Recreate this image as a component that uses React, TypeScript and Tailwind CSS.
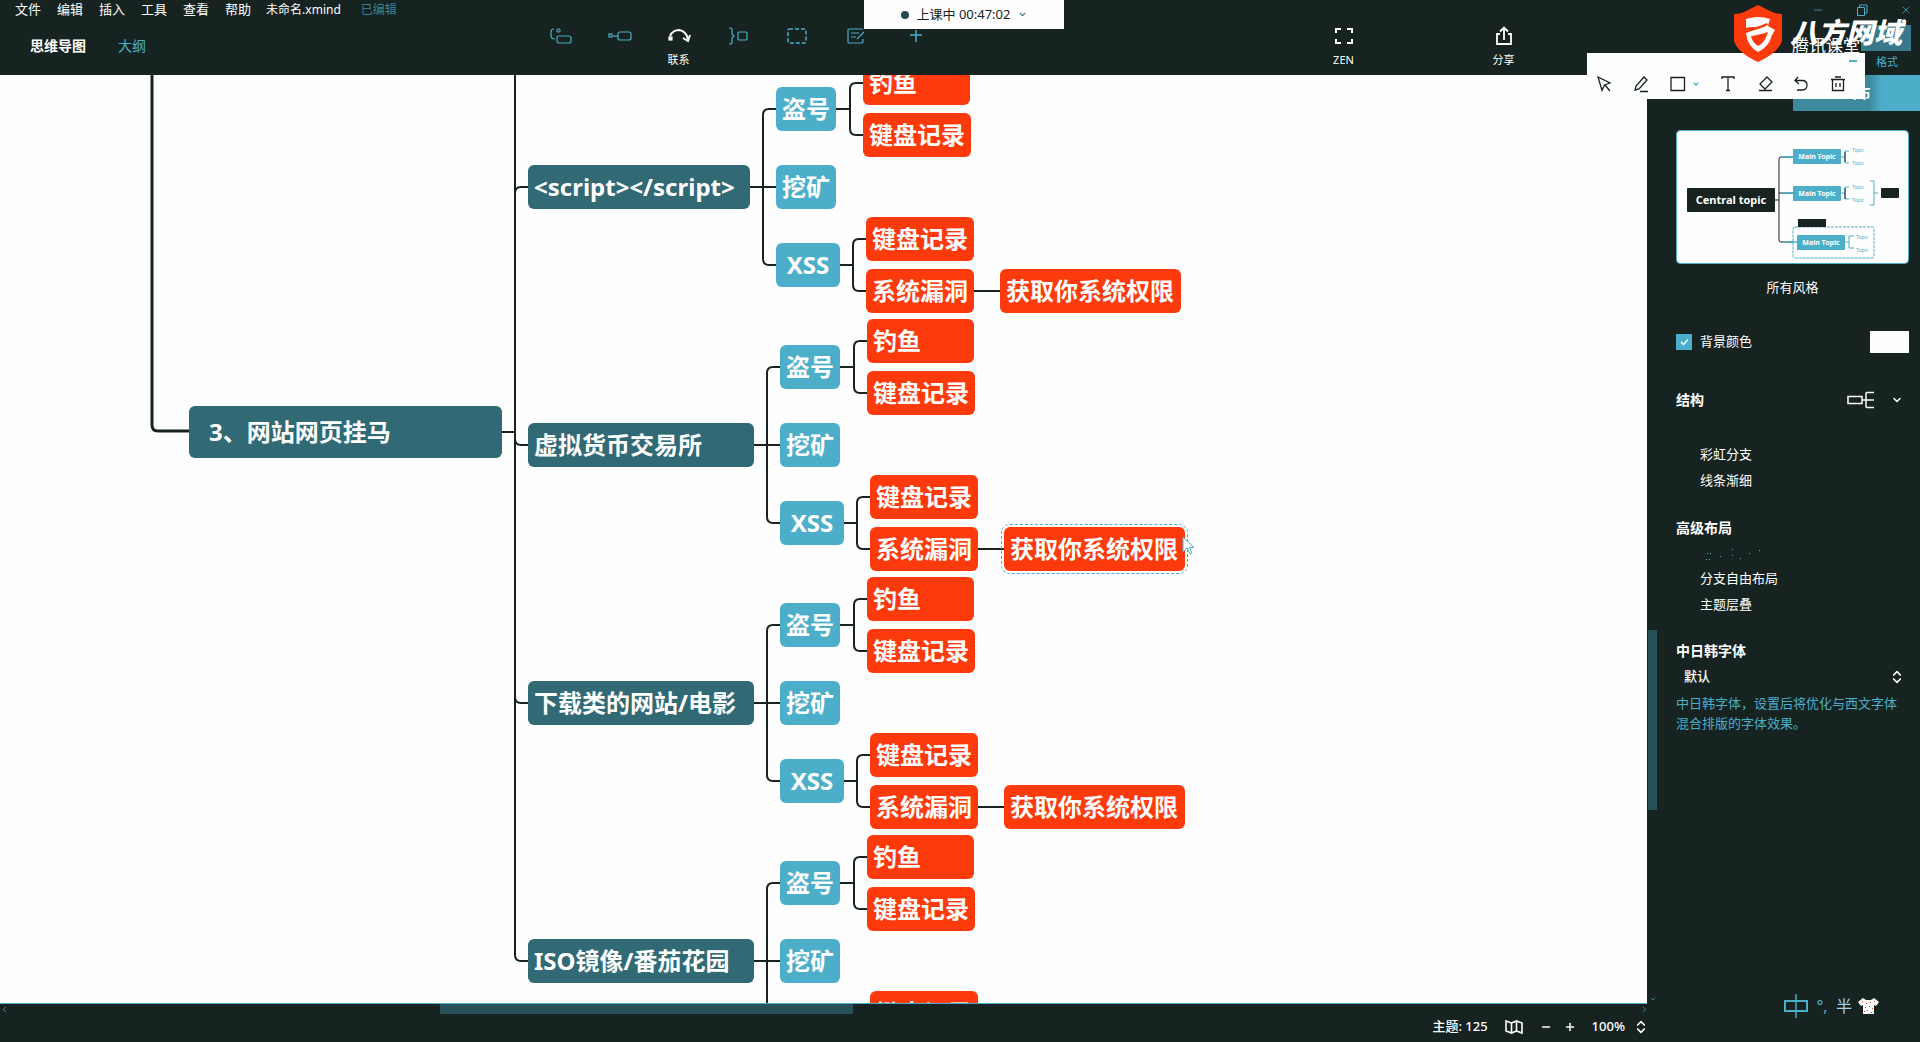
import React from "react";
import { ChevronDown, ChevronLeft, ChevronRight, ChevronsUpDown, Minus, Plus, X } from "lucide-react";

const LINE = "#162320";

type MapNode = { text: string; x: number; y: number; w: number; kind: "topic" | "sub" | "leaf"; selected?: boolean };

const groups = [
  { title: "<script></script>", width: 222, y: 187, dx: -4 },
  { title: "虚拟货币交易所", width: 226, y: 445, dx: 0 },
  { title: "下载类的网站/电影", width: 226, y: 703, dx: 0 },
  { title: "ISO镜像/番茄花园", width: 226, y: 961, dx: 0 },
];

const HEADER = 75;

function buildNodes(): MapNode[] {
  return groups.flatMap((g, i) => {
    const top = g.y - HEADER - 22;
    const d = g.dx;
    const nodes: MapNode[] = [
      { text: g.title, x: 528, y: top, w: g.width, kind: "topic" },
      { text: "盗号", x: 780 + d, y: top - 78, w: 60, kind: "sub" },
      { text: "挖矿", x: 780 + d, y: top, w: 60, kind: "sub" },
      { text: "XSS", x: 780 + d, y: top + 78, w: 64, kind: "sub" },
      { text: "钓鱼", x: 867 + d, y: top - 104, w: 107, kind: "leaf" },
      { text: "键盘记录", x: 867 + d, y: top - 52, w: 108, kind: "leaf" },
      { text: "键盘记录", x: 870 + d, y: top + 52, w: 108, kind: "leaf" },
      { text: "系统漏洞", x: 870 + d, y: top + 104, w: 108, kind: "leaf" },
      { text: "获取你系统权限", x: 1004 + d, y: top + 104, w: 181, kind: "leaf", selected: i === 1 },
    ];
    return nodes;
  });
}

const nodeStyles = {
  topic: "bg-[#316975] pl-1.5",
  sub: "bg-[#4caec9] justify-center",
  leaf: "bg-[#fd3a0c] pl-1.5",
};

function bracket(x0: number, xm: number, x1: number, mid: number, up: number, down: number) {
  return `M${x0} ${mid}H${xm} M${x1} ${mid - up}H${xm + 6}Q${xm} ${mid - up} ${xm} ${mid - up + 6}V${mid + down - 6}Q${xm} ${mid + down} ${xm + 6} ${mid + down}H${x1}`;
}

function Connectors() {
  return (
    <svg className="absolute left-0 top-0 h-full w-full" fill="none" stroke={LINE} strokeWidth="2" aria-hidden="true">
      <path strokeWidth="3" d="M152 0V350Q152 356 158 356H189" />
      <path d="M502 357H515M515 0V880Q515 886 521 886H528" />
      <path d="M515 118Q515 112 521 112H528M515 364Q515 370 521 370H528M515 622Q515 628 521 628H528" />
      {groups.map((g) => {
        const y = g.y - HEADER;
        const d = g.dx;
        return (
          <g key={g.title}>
            <path d={bracket(528 + g.width, 767 + d, 780 + d, y, 78, 78)} />
            <path d={`M${767 + d} ${y}H${780 + d}`} />
            <path d={bracket(840 + d, 854 + d, 867 + d, y - 78, 26, 26)} />
            <path d={bracket(844 + d, 857 + d, 870 + d, y + 78, 26, 26)} />
            <path d={`M${978 + d} ${y + 104}H${1004 + d}`} />
          </g>
        );
      })}
    </svg>
  );
}

function Canvas() {
  return (
    <main className="relative min-w-0 flex-1 overflow-hidden border-b border-[#4caec9] bg-[#fdfefd]">
      <Connectors />
      <div className="absolute left-[189px] top-[331px] flex h-[52px] w-[313px] items-center rounded-md bg-[#316975] pl-5 text-2xl font-bold">
        3、网站网页挂马
      </div>
      {buildNodes().map((n, i) => (
        <div
          key={i}
          className={`absolute flex h-11 items-center whitespace-nowrap rounded-md text-2xl font-bold ${nodeStyles[n.kind]} ${n.selected ? "outline-1 outline-offset-2 outline-dashed outline-[#4caec9]" : ""}`}
          style={{ left: n.x, top: n.y, width: n.w }}
        >
          {n.text}
        </div>
      ))}
      <svg className="absolute left-[1182px] top-[461px]" width="14" height="20" viewBox="0 0 14 20" fill="#fdfefd" stroke="#4caec9" strokeWidth="1">
        <path d="M1 1V16L5 12L8 18L10 17L7.500 11.500H12Z" />
      </svg>
    </main>
  );
}

const toolIcons = [
  { name: "主题", d: <><rect x="8" y="12" width="14" height="7" rx="2" /><path d="M5 5Q2 5 2 8V12Q2 15 6 15" /><rect x="8" y="5" width="3" height="3" rx="1" /></> },
  { name: "子主题", d: <><rect x="10" y="8" width="13" height="8" rx="2" /><rect x="1" y="10" width="3" height="3" /><path d="M5 12H10" /></> },
  { name: "联系", active: true, d: <><rect x="2" y="13" width="3" height="3" fill="currentColor" /><path strokeWidth="2" d="M3 12Q6 6 12 6Q19 7 21 15M16 14L21 17L23 11" /></> },
  { name: "概要", d: <><path d="M3 4H4Q6 4 6 6V10L8 12L6 14V18Q6 20 4 20H3" /><rect x="12" y="8" width="9" height="8" rx="1" /></> },
  { name: "外框", d: <rect x="3" y="5" width="18" height="14" rx="1" strokeWidth="1.500" strokeDasharray="4 2" /> },
  { name: "笔记", d: <><path d="M19 5H5Q4 5 4 6V18Q4 19 5 19H17Q19 19 19 17V15M7 9H15M7 13H12M13 15L20 8" /></> },
  { name: "插入", d: <path d="M13 6V18M7 11H19" strokeWidth="1.500" /> },
];

function ToolButton({ label, active, children }: { label: string; active?: boolean; children: React.ReactNode }) {
  return (
    <button aria-label={label} className={`flex w-[59px] flex-col items-center gap-1 ${active ? "text-white" : "text-[#4caec9]"}`}>
      <svg width="24" height="24" viewBox="0 0 24 24" fill="none" stroke="currentColor" strokeWidth="1.200">{children}</svg>
      {active && <span className="text-[11px] leading-4">{label}</span>}
    </button>
  );
}

function Header() {
  return (
    <header className="flex h-[75px] flex-none flex-col">
      <div className="flex h-5 items-center pl-[15px] pr-2 text-[13px]">
        <nav className="flex gap-4">
          {["文件", "编辑", "插入", "工具", "查看", "帮助"].map((m) => (
            <button key={m}>{m}</button>
          ))}
        </nav>
        <span className="ml-[15px] text-xs">未命名.xmind</span>
        <span className="ml-5 text-xs text-[#3a8295]">已编辑</span>
        <div className="ml-auto flex items-center gap-8 text-[#4caec9]">
          <button aria-label="最小化"><Minus size={12} strokeWidth={1.5} /></button>
          <button aria-label="还原">
            <svg width="12" height="12" viewBox="0 0 12 12" fill="none" stroke="currentColor"><path d="M1.500 3.500H8.500V11.500H1.500ZM3.500 3V1H11V9H9" /></svg>
          </button>
          <button aria-label="关闭"><X size={12} strokeWidth={1.5} /></button>
        </div>
      </div>
      <div className="flex h-[55px] items-start">
        <div className="flex w-[531px] items-center gap-8 pl-[30px] pt-4 text-sm">
          <button className="font-bold">思维导图</button>
          <button className="text-[#4caec9]">大纲</button>
        </div>
        <div className="flex items-start pt-1">
          {toolIcons.map((t) => (
            <ToolButton key={t.name} label={t.name} active={t.active}>{t.d}</ToolButton>
          ))}
        </div>
        <div className="ml-auto flex items-start gap-[101px] pr-[387px] pt-1">
          <ToolButton label="ZEN" active>
            <path strokeWidth="2" d="M4 9V5H9M15 5H20V9M20 15V19H15M9 19H4V15" />
          </ToolButton>
          <ToolButton label="分享" active>
            <path strokeWidth="1.800" d="M8 10H5V20H19V10H16M12 16V4M8 7.500L12 3.500L16 7.500" />
          </ToolButton>
        </div>
      </div>
    </header>
  );
}

function StylePreview() {
  const rows = [
    { x: 117, y: 19 },
    { x: 117, y: 56 },
    { x: 121, y: 105 },
  ];
  return (
    <svg className="w-full" viewBox="0 0 233 134" role="img" aria-label="Central topic">
      <rect x="0.500" y="0.500" width="232" height="133" rx="4" fill="#fdfefd" stroke="#4caec9" />
      <g fill="none" stroke={LINE}>
        <path d="M98 70H103M117 27H105Q103 27 103 29V110Q103 112 105 112H117M103 63H117" />
        <path d="M117 27H105M117 63H105M121 112H107" stroke="#4caec9" strokeWidth="1.500" />
        <path stroke="#4caec9" d="M165 27H169M173 21H169V33H173M165 63H169M173 57H169V69H173M168 112H173M178 106H173V118H178M194 51H198V75H194M198 63H202" />
        <path d="M169 22V32M169 58V69" />
        <rect x="117" y="97" width="81" height="31" rx="2" stroke="#4caec9" strokeDasharray="3 1" />
      </g>
      <rect x="11" y="58" width="88" height="24" rx="1" fill={LINE} />
      <text x="55" y="74" textAnchor="middle" fill="#fff" fontSize="11" fontWeight="700">Central topic</text>
      {rows.map((r) => (
        <g key={r.y}>
          <rect x={r.x} y={r.y} width="48" height="15" rx="1" fill="#4caec9" />
          <text x={r.x + 24} y={r.y + 10} textAnchor="middle" fill="#fff" fontSize="7" fontWeight="700">Main Topic</text>
        </g>
      ))}
      <g fill="#4caec9" fontSize="5">
        <text x="176" y="22">Topic</text>
        <text x="176" y="35">Topic</text>
        <text x="176" y="59">Topic</text>
        <text x="176" y="72">Topic</text>
        <text x="180" y="109">Topic</text>
        <text x="180" y="122">Topic</text>
      </g>
      <rect x="205" y="58" width="18" height="10" rx="1" fill={LINE} />
      <rect x="122" y="89" width="28" height="8" fill={LINE} />
    </svg>
  );
}

function Option({ label }: { label: string }) {
  return (
    <label className="flex h-[26px] items-center gap-2">
      <input type="checkbox" className="size-4 appearance-none" />
      {label}
    </label>
  );
}

function Sidebar() {
  return (
    <aside className="flex w-[262px] flex-none flex-col text-[13px]">
      <div className="flex justify-end">
        <button className="h-9 w-[127px] bg-linear-to-r from-[#3d8a9e] from-60% to-[#4caec9] to-70% text-sm font-bold">画布</button>
      </div>
      <div className="flex flex-col pl-[18px] pr-[11px] pt-[19px]">
        <StylePreview />
        <button className="mt-3.5 h-5">所有风格</button>
        <div className="mt-[33px] flex h-[22px] items-center justify-between">
          <label className="flex items-center gap-2">
            <span className="relative flex size-4">
              <input type="checkbox" defaultChecked className="size-4 appearance-none bg-[#4caec9]" />
              <svg className="pointer-events-none absolute inset-0" width="16" height="16" viewBox="0 0 16 16" fill="none" stroke="#fff" strokeWidth="1.500"><path d="M5 8L7.500 10.500L12 5.500" /></svg>
            </span>
            背景颜色
          </label>
          <button aria-label="选择背景颜色" className="h-[22px] w-[39px] bg-[#fdfefd]" />
        </div>
        <div className="mt-[35px] flex h-6 items-center">
          <span className="text-sm font-bold">结构</span>
          <button aria-label="选择结构" className="ml-auto flex items-center gap-4">
            <svg width="28" height="18" viewBox="0 0 28 18" fill="none" stroke="#fff" strokeWidth="1.500"><path d="M1 5.500H15V12.500H1ZM15 9H27M27 1.500H20Q19 1.500 19 2.500V15.500Q19 16.500 20 16.500H27" /></svg>
            <ChevronDown size={12} strokeWidth={3} className="mr-1.5" />
          </button>
        </div>
        <div className="mt-[30px]">
          <Option label="彩虹分支" />
          <Option label="线条渐细" />
        </div>
        <h2 className="mt-6 text-sm font-bold">高级布局</h2>
        <div className="mt-0.5">
          <div className="h-[26px] pl-[30px] pt-2">
            <svg width="56" height="12" viewBox="0 0 56 12" fill="#4caec9" aria-hidden="true"><path d="M1 5h1v1h-1zM4 5h1v1h-1zM0 11h1v1h-1zM3 11h1v1h-1zM14 8h1v1h-1zM26 1h1v1h-1zM26 7h1v1h-1zM34 10h1v1h-1zM43 5h1v1h-1zM53 2h1v1h-1z" /></svg>
          </div>
          <Option label="分支自由布局" />
          <Option label="主题层叠" />
        </div>
        <label htmlFor="cjk-font" className="mt-[23px] text-sm font-bold">中日韩字体</label>
        <div className="relative mt-1">
          <select id="cjk-font" className="h-6 w-full appearance-none bg-transparent pl-2 font-medium">
            <option>默认</option>
          </select>
          <ChevronsUpDown size={16} strokeWidth={2.5} className="pointer-events-none absolute right-1 top-1" />
        </div>
        <p className="mt-1 leading-5 text-[#4caec9]">中日韩字体，设置后将优化与西文字体混合排版的字体效果。</p>
      </div>
    </aside>
  );
}

function StatusBar() {
  return (
    <footer className="flex h-[38px] flex-none flex-col">
      <div className="flex h-2.5 items-center text-[#4caec9]">
        <ChevronLeft size={9} />
        <div className="ml-[431px] h-full w-[413px] bg-[#275059]" />
        <ChevronRight size={9} className="ml-auto mr-[271px]" />
      </div>
      <div className="flex h-[26px] items-center justify-end pr-[271px] text-[13px] font-medium">
        <span>主题: 125</span>
        <button aria-label="导航图" className="ml-4">
          <svg width="20" height="16" viewBox="0 0 20 16" fill="none" stroke="#fff" strokeWidth="1.600"><path d="M2 2L7.500 4V14L2 12ZM7.500 4L12.500 2V12L7.500 14M12.500 2L18 4V14L12.500 12" /></svg>
        </button>
        <button aria-label="缩小" className="ml-4"><Minus size={12} strokeWidth={3} /></button>
        <button aria-label="放大" className="ml-3"><Plus size={12} strokeWidth={3} /></button>
        <span className="ml-4">100%</span>
        <button aria-label="缩放比例" className="ml-2"><ChevronsUpDown size={16} strokeWidth={2.5} /></button>
      </div>
    </footer>
  );
}

function AnnotationBar() {
  return (
    <div className="absolute right-[55px] top-[53px] h-[46px] w-[278px] bg-[#fdfefd] text-[#162320]">
      <button aria-label="收起" className="absolute right-2 top-[7px] h-0.5 w-2 bg-[#4caec9]" />
      <div className="flex items-center justify-between pl-2 pr-[18px] pt-[22px]">
        {[
          ["选择", <path key="a" d="M3 2L15 8L9.500 10L7 15.500ZM10 10L15 16" />],
          ["画笔", <path key="a" d="M3 15L4 11L12 2L15 5L7 14ZM8 16.500H16" />],
          ["矩形", <path key="a" d="M3 2.500H16.500V15.500H3Z" />],
          ["文字", <path key="a" d="M3 4V2H15V4M9 2V15M7 15.500H11" />],
          ["橡皮擦", <path key="a" d="M11 2L16 7L9 14L4 9ZM3 15.500H16" />],
          ["撤销", <path key="a" d="M6 2L3 5.500L7 9M3 5.500H11Q15 6 15 10Q15 15 10 15H5" />],
          ["删除", <path key="a" d="M2 4.500H16M6 2H12M3.500 4.500V15.500H14.500V4.500M7 8V12M11 8V12" />],
        ].map(([name, d]) => (
          <button key={name as string} aria-label={name as string} className="flex items-center">
            <svg width="18" height="18" viewBox="0 0 18 18" fill="none" stroke="currentColor" strokeWidth="1.300">{d}</svg>
            {name === "矩形" && <ChevronDown size={8} strokeWidth={4} className="ml-1.5 text-[#4caec9]" />}
          </button>
        ))}
      </div>
    </div>
  );
}

function Overlays() {
  return (
    <>
      <button className="absolute left-[45%] top-0 flex h-[29px] w-[200px] items-center justify-center bg-[#fdfefd] text-[13px] text-[#162320]">
        <span className="mr-2 size-2 rounded-full bg-[#244a54]" />
        上课中 00:47:02
        <ChevronDown size={9} strokeWidth={3} className="ml-2 text-[#316975]" />
      </button>
      <div className="absolute right-[9px] top-[25px] h-[26px] w-[50px] bg-[#387a8b]" />
      <span className="absolute right-[22px] top-[54px] text-[11px] leading-4 text-[#4caec9]">格式</span>
      <span className="absolute right-[60px] top-[36px] text-[17px] leading-5">腾讯课堂</span>
      <AnnotationBar />
      <svg className="absolute right-[138px] top-[5px]" width="48" height="57" viewBox="0 0 48 57" aria-hidden="true">
        <path d="M24 0L34 5Q41 9 48 9V36Q44 48 24 57Q4 48 0 36V9Q8 9 14 5Z" fill="#fd3a0c" />
        <path d="M12 14Q24 10 36 14L34 21L41 25L38 30Q35 42 24 47Q13 41 12 28L25 23Q18 21 12 23Z" fill="#fff" />
        <path d="M17 31Q24 30 34 27Q31 38 24 41Q18 37 17 31Z" fill="#fd3a0c" />
        <path d="M11 24Q22 23 33 18L34 20Q24 25 12 27Z" fill="#fd3a0c" />
      </svg>
      <span className="absolute right-[18px] top-[16px] text-[28px] font-black italic leading-8">八方网域</span>
      <div className="absolute bottom-6 right-[41px] flex items-center gap-1.5 text-[#4caec9]">
        <svg width="24" height="24" viewBox="0 0 24 24" fill="none" stroke="currentColor" strokeWidth="2"><path d="M1 7H23V17H1Z" /><path d="M12 0V24" strokeWidth="1.500" /></svg>
        <span className="w-4 text-center text-base leading-6">°,</span>
        <span className="text-base leading-6 text-[#9ed2e0]">半</span>
        <svg width="21" height="18" viewBox="0 0 21 18" fill="#fff"><path d="M5 1L8 3H13L16 1L21 5L18 9L16 8V17H5V8L3 9L0 5Z" /><path fill="#fd3a0c" d="M4 4h1v1h-1zM8 6h1v1h-1zM12 5h1v1h-1zM7 10h1v1h-1zM11 9h1v1h-1zM14 11h1v1h-1zM9 13h1v1h-1zM13 15h1v1h-1zM16 4h1v1h-1zM6 14h1v1h-1z" /></svg>
      </div>
    </>
  );
}

export default function App() {
  return (
    <div className="relative flex h-screen flex-col overflow-hidden bg-[#162320] font-['Noto_Sans','Noto_Sans_CJK_SC',sans-serif] text-white">
      <Header />
      <div className="flex min-h-0 flex-1">
        <Canvas />
        <div className="flex w-[11px] flex-none flex-col items-center text-[#4caec9]">
          <div className="mt-[555px] h-[180px] w-[9px] bg-[#275059]" />
          <ChevronDown size={8} className="mb-px mt-auto" />
        </div>
        <Sidebar />
      </div>
      <StatusBar />
      <Overlays />
    </div>
  );
}
